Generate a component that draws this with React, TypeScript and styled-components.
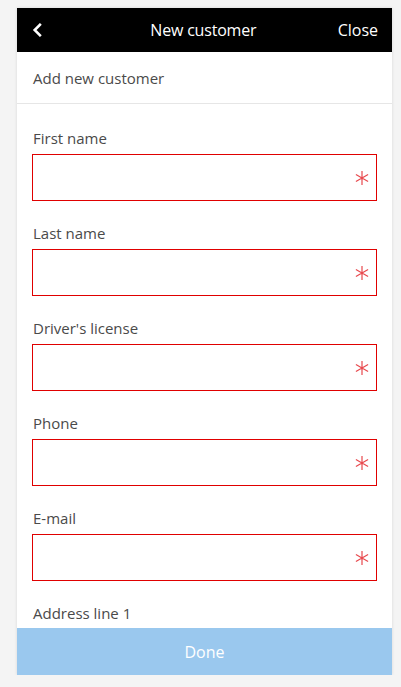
import React from "react";
import styled, { createGlobalStyle } from "styled-components";

const fields = ["First name", "Last name", "Driver's license", "Phone", "E-mail", "Address line 1"];

const GlobalStyle = createGlobalStyle`
  html, body {
    margin: 0;
    padding: 0;
    background: #f4f4f4;
    font-family: "Open Sans", "Liberation Sans", sans-serif;
  }
`;

function RequiredMark() {
  return (
    <Asterisk viewBox="0 0 14 14">
      <path d="M7 0V14M0.9 3.5L13.1 10.5M0.9 10.5L13.1 3.5" />
    </Asterisk>
  );
}

function ChevronLeft() {
  return (
    <BackIcon viewBox="0 0 10 12">
      <path d="M7.5 1.5L3 6L7.5 10.5" />
    </BackIcon>
  );
}

export default function App() {
  return (
    <>
      <GlobalStyle />
      <Panel>
        <Header>
          <HeaderButton aria-label="Back">
            <ChevronLeft />
          </HeaderButton>
          <Title>New customer</Title>
          <HeaderButton className="close">Close</HeaderButton>
        </Header>
        <SubHeader>Add new customer</SubHeader>
        <Form>
          {fields.map((name) => (
            <Field key={name}>
              <Label>{name}</Label>
              <InputBox>
                <Input />
                <RequiredMark />
              </InputBox>
            </Field>
          ))}
        </Form>
        <DoneButton disabled>Done</DoneButton>
      </Panel>
    </>
  );
}

const Panel = styled.div`
  margin: 8px 0 0 17px;
  width: 375px;
  height: 667px;
  background: #fff;
  box-shadow: 0 0 3px rgba(0, 0, 0, 0.12);
  display: flex;
  flex-direction: column;
  overflow: hidden;
`;

const Header = styled.header`
  flex: 0 0 44px;
  background: #000;
  color: #fff;
  display: flex;
  align-items: center;
  justify-content: space-between;
  padding: 0 14px 0 12px;
`;

const HeaderButton = styled.button`
  background: none;
  border: none;
  color: #fff;
  font-family: inherit;
  font-size: 16px;
  padding: 0;
  min-width: 40px;
  display: flex;
  align-items: center;

  &.close {
    justify-content: flex-end;
  }
`;

const BackIcon = styled.svg`
  width: 12px;
  height: 14px;
  margin-left: 2px;
  fill: none;
  stroke: #fff;
  stroke-width: 2.2;
  stroke-linecap: square;
`;

const Title = styled.div`
  font-size: 16px;
  letter-spacing: -0.2px;
`;

const SubHeader = styled.div`
  flex: 0 0 52px;
  box-sizing: border-box;
  border-bottom: 1px solid #e6e6e6;
  padding: 0 16px;
  display: flex;
  align-items: center;
  font-size: 15px;
  color: #4a4a4a;
`;

const Form = styled.div`
  flex: 1;
  overflow: hidden;
  padding: 24px 15px 0 15px;
`;

const Field = styled.div`
  display: flex;
  flex-direction: column;
  margin-bottom: 22px;
`;

const Label = styled.label`
  font-size: 15px;
  line-height: 20px;
  color: #4a4a4a;
  padding-left: 1px;
  margin-bottom: 6px;
`;

const InputBox = styled.div`
  box-sizing: border-box;
  height: 47px;
  border: 1px solid #e00000;
  display: flex;
  align-items: center;
  padding: 0 7px 0 10px;
`;

const Input = styled.input`
  flex: 1;
  min-width: 0;
  border: none;
  outline: none;
  font-family: inherit;
  font-size: 15px;
  background: transparent;
`;

const Asterisk = styled.svg`
  width: 14px;
  height: 14px;
  flex: 0 0 14px;
  fill: none;
  stroke: #e8484d;
  stroke-width: 1.2;
`;

const DoneButton = styled.button`
  flex: 0 0 47px;
  border: none;
  background: #9ac8ee;
  color: #fff;
  font-family: inherit;
  font-size: 16px;
  font-weight: 500;
`;
